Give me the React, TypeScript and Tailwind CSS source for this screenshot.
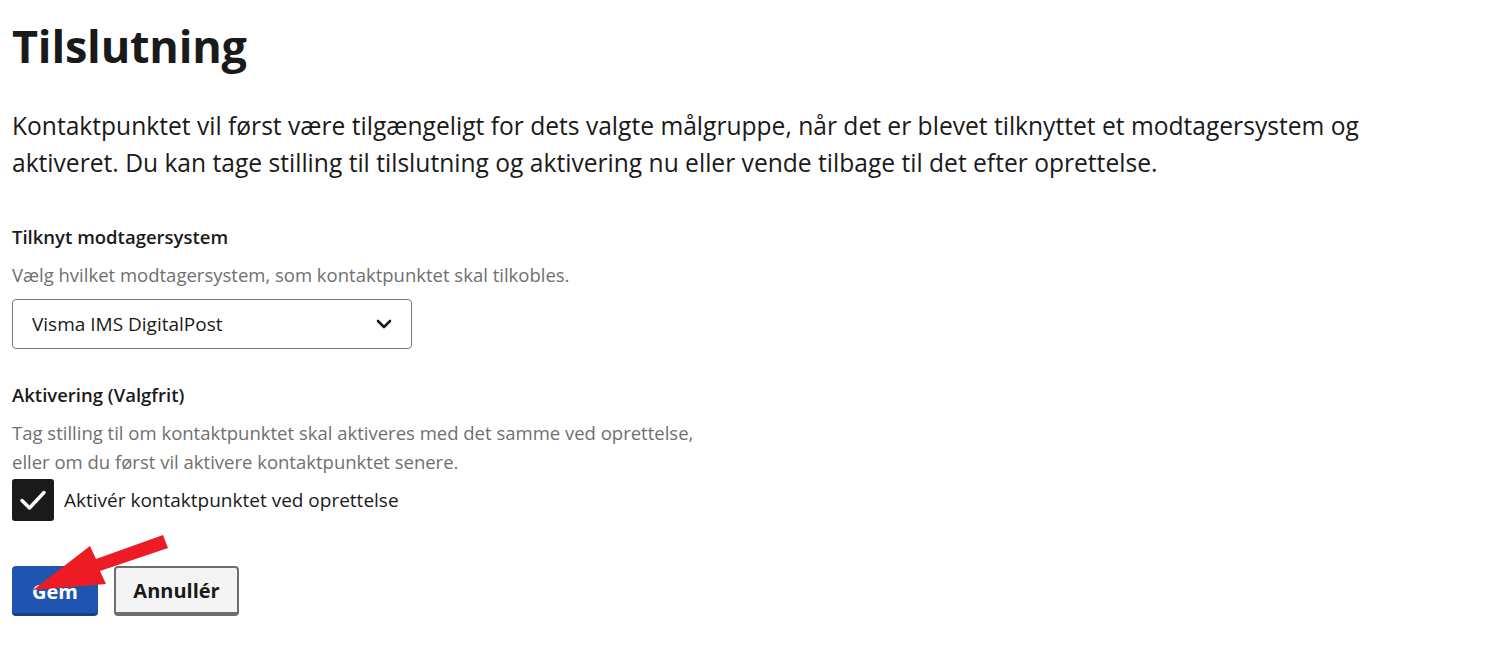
import { useState } from 'react';

export default function App() {
  const [system, setSystem] = useState('visma');
  const [activate, setActivate] = useState(true);

  return (
    <div className="relative min-h-screen bg-white px-3 pt-[14px] text-[#1a1a1a] font-['Open_Sans',sans-serif]">
      <h1 className="text-[45px] font-bold leading-[64px] tracking-[-0.2px]">Tilslutning</h1>

      <p className="mt-[29px] max-w-[1400px] text-[24.6px] leading-[37px]">
        Kontaktpunktet vil først være tilgængeligt for dets valgte målgruppe, når det er blevet
        tilknyttet et modtagersystem og aktiveret. Du kan tage stilling til tilslutning og aktivering
        nu eller vende tilbage til det efter oprettelse.
      </p>

      {/* Modtagersystem */}
      <div className="mt-[42px]">
        <label className="block text-[18.5px] font-semibold leading-[28px]">Tilknyt modtagersystem</label>
        <p className="mt-[10px] text-[18.5px] leading-[28px] text-[#707070]">
          Vælg hvilket modtagersystem, som kontaktpunktet skal tilkobles.
        </p>
        <div className="relative mt-[10px] w-[400px]">
          <select
            value={system}
            onChange={(e) => setSystem(e.target.value)}
            className="h-[50px] w-full appearance-none rounded-[4px] border border-[#7a7a7a] bg-white pl-[19px] pr-10 text-[19px] text-[#1a1a1a]"
          >
            <option value="visma">Visma IMS DigitalPost</option>
            <option value="other">Andet modtagersystem</option>
          </select>
          <svg
            className="pointer-events-none absolute right-[20px] top-1/2 -translate-y-1/2"
            width="16"
            height="10"
            viewBox="0 0 16 10"
            fill="none"
          >
            <path d="M2 2l6 6 6-6" stroke="#1a1a1a" strokeWidth="2.6" strokeLinecap="round" strokeLinejoin="round" />
          </svg>
        </div>
      </div>

      {/* Aktivering */}
      <div className="mt-[32px]">
        <label className="block text-[18.5px] font-semibold leading-[28px]">Aktivering (Valgfrit)</label>
        <p className="mt-[9px] text-[18.5px] leading-[29px] text-[#707070]">
          Tag stilling til om kontaktpunktet skal aktiveres med det samme ved oprettelse,
          <br />
          eller om du først vil aktivere kontaktpunktet senere.
        </p>
        <label className="mt-[3px] flex cursor-pointer items-center gap-[10px]">
          <span
            onClick={() => setActivate(!activate)}
            className={`flex h-[42px] w-[42px] items-center justify-center rounded-[3px] ${
              activate ? 'bg-[#1a1a1a]' : 'border-2 border-[#1a1a1a] bg-white'
            }`}
          >
            {activate && (
              <svg width="28" height="22" viewBox="0 0 28 22" fill="none">
                <path d="M3 11.5l7.5 7.5L25 3.5" stroke="white" strokeWidth="3.4" strokeLinecap="round" strokeLinejoin="round" />
              </svg>
            )}
          </span>
          <span className="text-[19px] leading-[28px]">Aktivér kontaktpunktet ved oprettelse</span>
        </label>
      </div>

      {/* Knapper */}
      <div className="mt-[45px] flex gap-[16px]">
        <button className="h-[50px] w-[86px] rounded-[4px] border-b-[3px] border-[#173f85] bg-[#1f55b0] pt-[4px] text-[20px] font-bold text-white">
          Gem
        </button>
        <button className="h-[50px] w-[125px] rounded-[4px] border-2 border-b-[4px] border-[#6e6e6e] bg-[#f4f4f4] pt-[2px] text-[20px] font-bold text-[#1a1a1a]">
          Annullér
        </button>
      </div>

      {/* Annotation arrow */}
      <svg className="pointer-events-none absolute left-0 top-0" width="200" height="620" viewBox="0 0 200 620">
        <polygon points="33,590 106,584 100,571 168,548 163,535 96,559 90,546" fill="#ed1c24" />
      </svg>
    </div>
  );
}
